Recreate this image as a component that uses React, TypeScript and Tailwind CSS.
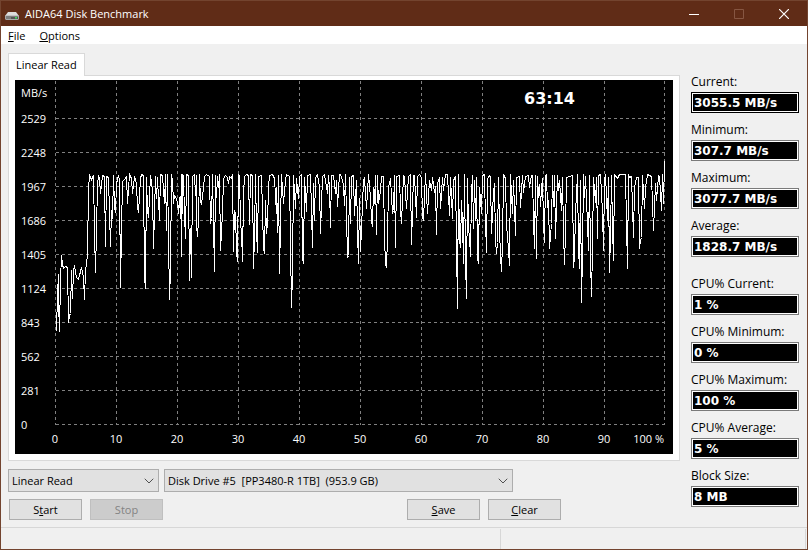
import React, { useState } from 'react';
import { ChevronDown } from 'lucide-react';

const yLabels = ['2529', '2248', '1967', '1686', '1405', '1124', '843', '562', '281', '0'];
const xLabels = ['0', '10', '20', '30', '40', '50', '60', '70', '80', '90'];
const xLines = [40, 101, 162, 223, 284, 345, 406, 467, 528, 589, 649];

// read speed trace, x,y pairs in chart units
const trace = `
41,251 42,214 43,194 43,222 44,251 45,200 46,175 47,184 48,188 50,186 52,187 53,242 54,235 55,233 56,190 57,218 58,190 59,185
61,197 63,199 64,195 66,187 68,197 69,219 70,190 71,183 72,175 73,108 74,95 76,99 78,95 79,152 80,192 81,150 82,104 83,95
84,98 85,113 87,95 89,96 90,166 91,96 92,96 93,98 95,166 96,130 97,138 98,95 99,126 100,132 101,103 103,95 104,99 105,207
106,150 107,101 109,99 111,96 112,123 114,94 116,98 117,113 119,96 121,103 122,127 123,132 125,98 126,94 128,95 129,196
130,208 131,97 132,130 133,137 135,95 137,110 138,168 140,96 141,118 142,97 144,140 145,94 147,95 149,123 150,94 151,150
152,94 153,157 154,219 155,190 156,94 157,100 158,123 159,115 160,116 162,122 163,133 164,117 165,138 166,94 166,176
167,94 168,96 169,135 170,158 171,94 173,95 174,200 175,148 176,197 177,96 179,94 180,115 181,95 181,145 182,156 183,140
184,94 185,120 186,124 188,107 189,96 191,94 194,96 195,143 196,138 197,94 198,142 199,191 200,95 201,117 202,96 203,107
204,94 205,170 206,152 207,132 208,98 210,95 212,97 213,103 214,96 216,98 217,94 218,171 219,130 220,133 221,171 222,181
223,94 224,95 225,142 226,152 227,181 228,113 229,96 231,94 233,95 234,144 235,94 237,95 238,188 239,157 240,94 241,150
242,172 243,96 246,95 248,167 249,173 250,120 251,153 252,143 253,107 254,95 257,94 259,98 261,133 261,107 262,152 263,95
264,193 265,143 266,94 268,123 270,100 271,94 274,96 275,162 276,227 277,193 278,95 280,128 281,98 283,118 284,96 286,94
287,177 288,183 289,97 291,131 292,95 295,94 297,167 298,103 299,140 300,97 302,94 304,107 305,153 307,96 309,94 312,113
313,95 314,108 315,147 316,95 318,95 320,113 321,100 322,126 324,94 325,94 327,100 328,105 329,125 330,94 331,135 332,177
333,175 334,97 335,143 336,96 338,95 339,135 341,100 342,150 343,183 344,118 345,171 346,148 348,100 349,98 351,128
353,94 355,117 356,140 357,146 358,107 359,123 360,95 361,154 362,95 363,123 365,110 366,96 368,96 369,158 370,183
371,187 372,157 373,107 375,98 377,133 378,130 379,95 380,167 381,96 384,95 385,130 386,143 388,95 389,96 391,128 393,96
395,94 396,164 398,95 399,95 401,137 402,96 404,94 406,97 407,137 408,139 410,93 412,133 414,100 416,110 417,97 419,112
420,106 421,154 422,103 424,97 425,128 427,97 428,110 430,94 432,94 434,135 435,97 437,138 438,100 440,96 441,163
442,228 443,94 444,160 445,167 446,120 447,142 448,183 449,94 450,180 451,218 452,98 453,148 454,157 455,176 456,113
457,95 458,148 459,100 460,140 461,97 462,177 463,183 464,107 466,133 467,95 469,94 470,141 471,172 472,98 474,95
475,97 476,153 478,112 479,103 480,160 481,173 482,162 483,97 484,148 485,176 486,191 487,163 488,94 490,98 491,145
492,155 494,185 495,94 497,133 498,100 500,155 501,97 504,96 505,127 507,95 508,112 510,96 513,95 514,107 516,95 517,95
518,140 519,168 520,95 521,178 522,96 523,117 524,104 525,126 526,108 527,98 528,142 529,162 530,95 531,94 532,127
533,120 534,168 536,143 537,95 538,126 539,95 540,158 542,95 543,110 544,100 546,130 547,97 548,152 549,184 550,152
551,97 554,96 557,95 558,187 559,177 560,132 562,94 563,168 564,188 565,100 566,222 567,173 568,94 569,117 570,96
572,143 573,170 574,95 575,178 576,216 577,167 578,97 580,122 581,97 582,158 583,95 585,94 587,132 588,170 589,100
590,94 592,140 593,97 594,192 595,155 596,95 597,146 598,180 599,94 602,98 604,94 610,94 611,142 612,188 613,94 614,97
616,96 618,157 619,107 621,97 623,97 624,168 625,160 626,157 627,95 629,128 630,107 632,94 636,96 638,150 640,103
641,120 643,95 644,96 646,130 647,94 648,123 649,81`;

const readings = [
  { id: 'current', label: 'Current:', value: '3055.5 MB/s' },
  { id: 'minimum', label: 'Minimum:', value: '307.7 MB/s' },
  { id: 'maximum', label: 'Maximum:', value: '3077.7 MB/s' },
  { id: 'average', label: 'Average:', value: '1828.7 MB/s' },
];

const cpuReadings = [
  { id: 'cpu-current', label: 'CPU% Current:', value: '1 %' },
  { id: 'cpu-minimum', label: 'CPU% Minimum:', value: '0 %' },
  { id: 'cpu-maximum', label: 'CPU% Maximum:', value: '100 %' },
  { id: 'cpu-average', label: 'CPU% Average:', value: '5 %' },
  { id: 'block-size', label: 'Block Size:', value: '8 MB' },
];

const DriveIcon = () => (
  <svg width="14" height="8" viewBox="0 0 14 8" className="mt-1" aria-hidden="true">
    <path d="M3 0h8l3 4H0z" fill="#dcdcdc" />
    <path d="M0 3.5h14V7l-1 1H1L0 7z" fill="#a9a9a9" />
    <path d="M1 4.5h12V7H1z" fill="#555" />
    <path d="M1 4.5h5V7H1z" fill="#7d7d7d" />
    <path d="M10 5h2v1.5h-2z" fill="#3ddc5a" />
  </svg>
);

const TitleBar = () => (
  <header className="flex h-[26px] items-center border-t border-[#73442f] bg-[#602c17] pl-1 text-white">
    <DriveIcon />
    <h1 className="ml-1.5 flex-1">AIDA64 Disk Benchmark</h1>
    <button aria-label="Minimize" className="flex h-full w-[45px] items-center justify-center">
      <svg width="10" height="10" viewBox="0 0 10 10" shapeRendering="crispEdges">
        <path d="M0 5h10v1H0z" fill="#fff" />
      </svg>
    </button>
    <button aria-label="Maximize" disabled className="flex h-full w-[45px] items-center justify-center">
      <svg width="10" height="10" viewBox="0 0 10 10" fill="none" stroke="#865642">
        <path d="M.5.5h9v9h-9z" />
      </svg>
    </button>
    <button aria-label="Close" className="flex h-full w-[46px] items-center justify-center">
      <svg width="10" height="10" viewBox="0 0 10 10" fill="none" stroke="#fff">
        <path d="M0 0l10 10M10 0L0 10" strokeWidth="1.2" />
      </svg>
    </button>
  </header>
);

const Chart = () => (
  <svg viewBox="0 0 658 374" className="block w-full bg-black" role="img" aria-label="Linear read speed">
    <g transform="translate(.5 .5)" fill="none" shapeRendering="crispEdges">
      <g stroke="#808080" strokeDasharray="3 3">
        {yLabels.map((label, i) => (
          <path key={label} d={`M40 ${38 + i * 34}H649`} />
        ))}
        {xLines.map((x) => (
          <path key={x} d={`M${x} 0V344`} />
        ))}
      </g>
      <polyline points={trace} stroke="#fff" />
    </g>
    <g fill="#fff" fontSize="11">
      <text x="6" y="17">MB/s</text>
      {yLabels.map((label, i) => (
        <text key={label} x="6" y={43 + i * 34}>{label}</text>
      ))}
      {xLabels.map((label, i) => (
        <text key={label} x={40 + i * 61} y="363" textAnchor="middle">{label}</text>
      ))}
      <text x="649" y="363" textAnchor="end">100 %</text>
    </g>
    <text x="509" y="24" fill="#fff" fontSize="16" fontWeight="bold" className="font-['DejaVu_Sans',sans-serif]">
      63:14
    </text>
  </svg>
);

type SelectProps = {
  label: string;
  options: string[];
  className: string;
};

const Select: React.FC<SelectProps> = ({ label, options, className }) => (
  <div className={`relative ${className}`}>
    <select
      aria-label={label}
      className="block h-[23px] w-full appearance-none border border-[#adadad] bg-[#e1e1e1] pl-[3px] pr-5 outline-none"
    >
      {options.map((option) => (
        <option key={option}>{option}</option>
      ))}
    </select>
    <ChevronDown className="pointer-events-none absolute right-0.5 top-1 size-4 text-[#505050]" strokeWidth={1.5} />
  </div>
);

type ReadingProps = {
  id: string;
  label: string;
  value: string;
  active?: boolean;
};

const Reading: React.FC<ReadingProps> = ({ id, label, value, active }) => (
  <div>
    <label htmlFor={id} className="block h-[18px] text-[12px] leading-4">{label}</label>
    <input
      id={id}
      readOnly
      value={value}
      className={`block h-[21px] w-full border bg-black px-0.5 font-['DejaVu_Sans',sans-serif] text-[12px] font-bold text-white shadow-[inset_0_0_0_1px_#fff] outline-none ${
        active ? 'border-black' : 'border-[#7a7a7a]'
      }`}
    />
  </div>
);

const buttonClass =
  'h-[21px] w-[73px] border border-[#adadad] bg-[#e1e1e1] leading-4 disabled:border-[#bfbfbf] disabled:bg-[#cccccc] disabled:text-[#838383]';

export default function App() {
  const [running] = useState(false);

  return (
    <div className="flex min-h-screen flex-col border-x border-b border-[#73442f] bg-[#f0f0f0] font-['Open_Sans',sans-serif] text-[11px] leading-4 text-black">
      <TitleBar />

      <nav className="flex h-[18px] items-end gap-3.5 bg-white pl-[7px]">
        <button><u>F</u>ile</button>
        <button><u>O</u>ptions</button>
      </nav>

      <main className="flex flex-1 items-start gap-[11px] pl-[7px] pr-2 pt-[9px]">
        <div className="min-w-0 flex-1">
          <div role="tablist" className="flex">
            <button
              role="tab"
              aria-selected="true"
              className="relative -mb-px h-[23px] border border-b-0 border-[#d9d9d9] bg-white px-[7px]"
            >
              Linear Read
            </button>
          </div>
          <section className="border border-[#d9d9d9] bg-white px-1.5 pb-1.5 pt-1">
            <Chart />
          </section>

          <div className="mt-2 flex gap-[5px]">
            <Select label="Test" options={['Linear Read']} className="w-[151px]" />
            <Select
              label="Drive"
              options={['Disk Drive #5\u00a0 [PP3480-R 1TB]\u00a0 (953.9 GB)']}
              className="w-[349px]"
            />
          </div>

          <div className="mt-[7px] flex gap-2 pl-px">
            <button className={buttonClass}>S<u>t</u>art</button>
            <button className={buttonClass} disabled={!running}>Stop</button>
            <div className="w-[228px]" />
            <button className={buttonClass}><u>S</u>ave</button>
            <button className={buttonClass}><u>C</u>lear</button>
          </div>
        </div>

        <aside className="mt-[21px] w-[108px] space-y-[19px]">
          <div className="space-y-[9px]">
            {readings.map((item, i) => (
              <Reading key={item.id} {...item} active={i === 0} />
            ))}
          </div>
          <div className="space-y-[9px]">
            {cpuReadings.map((item) => (
              <Reading key={item.id} {...item} />
            ))}
          </div>
        </aside>
      </main>

      <footer className="flex h-[22px] border-t border-[#d7d7d7] pr-px pt-px">
        <div className="w-[500px] border-r border-[#d7d7d7]" />
        <div className="flex-1 border-r border-[#d7d7d7]" />
      </footer>
    </div>
  );
}
